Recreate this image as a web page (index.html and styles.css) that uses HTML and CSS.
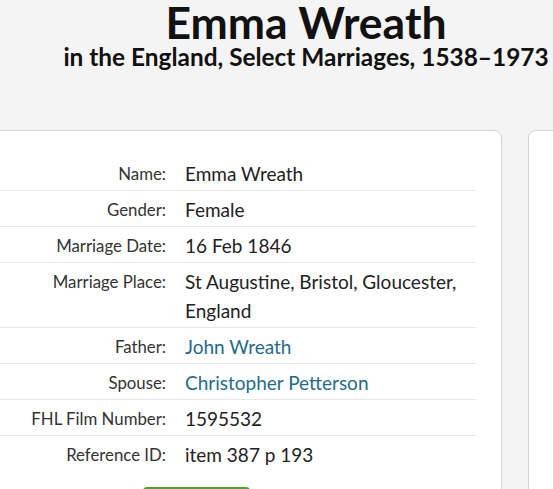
FILE: index.html
```html
<!DOCTYPE html>
<html>
<head>
<meta charset="utf-8">
<link rel="stylesheet" href="styles.css">
</head>
<body>
<div class="page">
  <header class="header">
    <h1 class="title">Emma Wreath</h1>
    <h2 class="subtitle">in the England, Select Marriages, 1538–1973</h2>
  </header>
  <div class="cards">
    <section class="card main">
      <table class="facts">
        <tr><th>Name:</th><td>Emma Wreath</td></tr>
        <tr><th>Gender:</th><td>Female</td></tr>
        <tr><th>Marriage Date:</th><td>16 Feb 1846</td></tr>
        <tr><th>Marriage Place:</th><td>St Augustine, Bristol, Gloucester, England</td></tr>
        <tr><th>Father:</th><td><a class="link" href="#">John Wreath</a></td></tr>
        <tr><th>Spouse:</th><td><a class="link" href="#">Christopher Petterson</a></td></tr>
        <tr><th>FHL Film Number:</th><td>1595532</td></tr>
        <tr class="last"><th>Reference ID:</th><td>item 387 p 193</td></tr>
      </table>
      <div class="actions"><div class="btn"></div></div>
    </section>
    <section class="card side"></section>
  </div>
</div>
</body>
</html>
```
FILE: styles.css
```css
html, body { margin: 0; padding: 0; }
body {
  background: #f4f4f4;
  font-family: Lato, "Liberation Sans", sans-serif;
  color: #333;
  overflow: hidden;
  width: 553px;
  height: 489px;
}
.page { width: 553px; }
.header {
  text-align: center;
  padding-left: 59px;
  height: 130px;
  box-sizing: border-box;
}
.title {
  margin: 0;
  font-size: 44.5px;
  line-height: 44px;
  font-weight: 700;
  color: #111;
}
.subtitle {
  margin: 0;
  font-size: 24.4px;
  line-height: 26px;
  font-weight: 700;
  color: #111;
}
.cards {
  display: flex;
  gap: 26px;
  margin-left: -30px;
}
.card {
  background: #fff;
  border: 1px solid #d4d4d4;
  border-radius: 8px;
  height: 420px;
  box-sizing: border-box;
  flex-shrink: 0;
}
.main { width: 532px; padding: 24px 25px 0 0; }
.side { width: 100px; }
.facts { border-collapse: collapse; width: 100%; }
.facts th, .facts td {
  border-bottom: 1px solid #e6e6e6;
  padding: 4px 0 2px;
  vertical-align: top;
  line-height: 29px;
}
.facts .last th, .facts .last td { border-bottom: none; }
.facts th {
  text-align: right;
  font-weight: 400;
  font-size: 16.8px;
  width: 195px;
  padding-right: 19px;
  white-space: nowrap;
  color: #333;
}
.facts td { font-size: 19px; color: #222; }
.link { color: #1f6b88; text-decoration: none; }
.actions { padding-left: 172px; padding-top: 16px; }
.btn {
  width: 107px;
  height: 36px;
  background: #5a9e2f;
  border-radius: 4px;
}
```
